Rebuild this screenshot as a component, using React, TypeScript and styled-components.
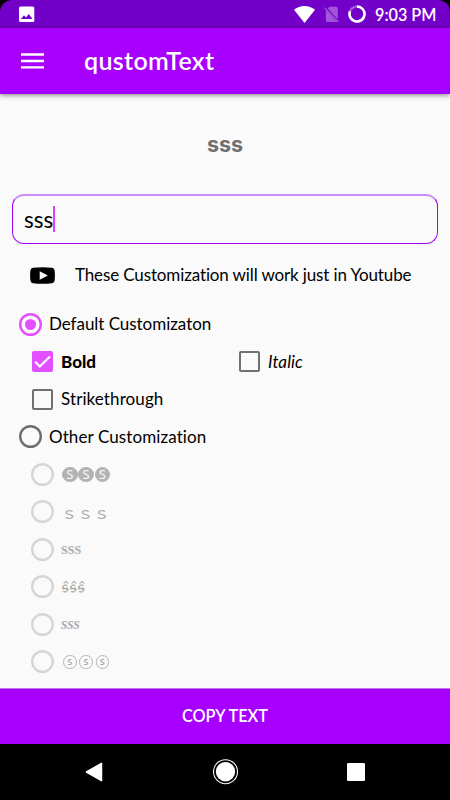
import React from "react";
import styled, { createGlobalStyle } from "styled-components";

const GlobalStyle = createGlobalStyle`
  * { box-sizing: border-box; }
  body { margin: 0; background: #000; }
`;

const Screen = styled.div`
  width: 450px;
  height: 800px;
  display: flex;
  flex-direction: column;
  overflow: hidden;
  background: #fafafa;
  color: #000;
  font-family: Lato, "Open Sans", sans-serif;
  font-variant-ligatures: none;
`;

const StatusCorners = styled.div`
  height: 28px;
  flex: none;
  background: #000;
`;

const StatusBar = styled.div`
  height: 28px;
  display: flex;
  align-items: center;
  padding: 0 15px 0 18px;
  border-radius: 12px 12px 0 0;
  background: #7300c8;
  color: #fff;
`;

const StatusIcons = styled.div`
  margin-left: auto;
  display: flex;
  align-items: center;
  gap: 9px;
`;

const Clock = styled.span`
  width: 60px;
  font-size: 16.2px;
  font-weight: 600;
  line-height: 20px;
  padding-top: 1px;
  white-space: nowrap;
`;

const AppBar = styled.header`
  height: 65.5px;
  flex: none;
  display: flex;
  align-items: center;
  gap: 40px;
  padding: 0 21px;
  background: #a800ff;
  box-shadow: 0 1px 5px rgba(0, 0, 0, 0.5);
  color: #fff;
`;

const Title = styled.h1`
  margin: -1px 0 0;
  font-size: 25px;
  font-weight: 600;
  line-height: 30px;
  letter-spacing: 0.35px;
`;

const Content = styled.main`
  flex: 1;
  display: flex;
  flex-direction: column;
  padding-top: 27.5px;
`;

const Preview = styled.div`
  height: 73px;
  text-align: center;
  font: 700 21.5px/47px Inter, sans-serif;
  color: #6f6f6f;
`;

const TextField = styled.div`
  height: 50px;
  margin: 0 12px;
  padding: 0 0 1px 11px;
  display: flex;
  align-items: center;
  border: 1px solid #a100f5;
  border-top: 2px solid #c88cff;
  border-radius: 12px;
  font-size: 22.5px;
`;

const Caret = styled.span`
  width: 2px;
  height: 26px;
  background: #e040fb;
`;

const Notice = styled.div`
  height: 61.5px;
  display: flex;
  align-items: center;
  gap: 20px;
  padding: 1px 0 0 30px;
`;

const Row = styled.div<{ $indent: number }>`
  height: 37.5px;
  display: flex;
  align-items: center;
  padding-left: ${(p) => p.$indent}px;
`;

const Cell = styled.div<{ $width?: number; $gap: number }>`
  width: ${(p) => (p.$width ? `${p.$width}px` : "auto")};
  display: flex;
  align-items: center;
  gap: ${(p) => p.$gap}px;
`;

const Label = styled.span<{ $spacing?: number; $bold?: boolean; $italic?: boolean }>`
  font-size: 17px;
  line-height: 22px;
  white-space: nowrap;
  letter-spacing: ${(p) => p.$spacing ?? 0}px;
  font-weight: ${(p) => (p.$bold ? 900 : 400)};
  font-style: ${(p) => (p.$italic ? "italic" : "normal")};
`;

const Radio = styled.span<{ $color: string; $checked?: boolean }>`
  width: 23px;
  height: 23px;
  flex: none;
  display: grid;
  place-items: center;
  box-shadow: inset 0 0 0 2.4px ${(p) => p.$color};
  border-radius: 50%;
  &::after {
    content: "";
    width: 11px;
    height: 11px;
    border-radius: 50%;
    background: ${(p) => (p.$checked ? p.$color : "transparent")};
  }
`;

const Checkbox = styled.span<{ $checked?: boolean }>`
  width: 21px;
  height: 21px;
  flex: none;
  display: grid;
  place-items: center;
  border: 2px solid ${(p) => (p.$checked ? "#e14fff" : "#707070")};
  border-radius: 2px;
  background: ${(p) => (p.$checked ? "#e14fff" : "transparent")};
`;

const Discs = styled.span`
  display: flex;
  gap: 0.8px;
`;

const Disc = styled.span<{ $filled?: boolean }>`
  width: ${(p) => (p.$filled ? 15.5 : 13.5)}px;
  height: ${(p) => (p.$filled ? 15.5 : 13.5)}px;
  margin: ${(p) => (p.$filled ? 0 : "0 1px")};
  display: grid;
  place-items: center;
  border: 1px solid #b3b3b3;
  border-radius: 50%;
  background: ${(p) => (p.$filled ? "#b3b3b3" : "transparent")};
  color: ${(p) => (p.$filled ? "#fafafa" : "#a8a8a8")};
  font: ${(p) => (p.$filled ? "400 13px/13px" : "600 9px/11px")} "Noto Sans", sans-serif;
`;

const Sample = styled.span<{ $font: string; $spacing?: number }>`
  margin-left: -1px;
  color: #b0b0b0;
  font: ${(p) => p.$font};
  letter-spacing: ${(p) => p.$spacing ?? 0}px;
  white-space: nowrap;
`;

const CopyButton = styled.button`
  height: 56.5px;
  flex: none;
  border: 0;
  border-top: 1px solid #bb74ea;
  padding: 0;
  background: #a800ff;
  color: #fff;
  font: 600 16.3px/20px Lato, sans-serif;
`;

const NavBar = styled.nav`
  height: 56px;
  flex: none;
  display: flex;
  align-items: center;
  justify-content: space-between;
  padding: 0 85px;
  background: #000;
`;

const ImageIcon = () => (
  <svg width="17" height="17" viewBox="0 0 17 17">
    <rect x="1" y="0.5" width="15.3" height="15.5" rx="1.5" fill="#fff" />
    <path d="M2.8 13 6 9.3 8 11.4 10.8 8 14.6 13Z" fill="#7300c8" />
  </svg>
);

const WifiIcon = () => (
  <svg width="21" height="17" viewBox="0 0 21 17">
    <path d="M0 3.8Q4.5 0 10.5 0T21 3.8L10.5 17Z" fill="#fff" />
  </svg>
);

const NoSimIcon = () => (
  <svg width="15" height="17" viewBox="0 0 15 17">
    <path d="M5.5.8H12q1.8 0 1.8 1.7V13.4L3.8 2.5Z M1.8 3.4 13.2 15.9 12.4 16H3.5q-1.7 0-1.7-1.7Z" fill="#a155da" />
    <path d="M.5 1.6 14.4 16.2" stroke="#a155da" strokeWidth="1.2" />
  </svg>
);

const LoadIcon = () => (
  <svg width="18" height="18" viewBox="0 0 18 18" fill="none" strokeWidth="2.6">
    <circle cx="9" cy="9" r="7.5" stroke="#a155da" />
    <path d="M9 1.5A7.5 7.5 0 1 1 2 6.4" stroke="#fff" />
  </svg>
);

const MenuIcon = () => (
  <svg width="23" height="16" viewBox="0 0 23 16">
    <path d="M0 1.5h23M0 8h23M0 14.3h23" stroke="#fff" strokeWidth="2.3" />
  </svg>
);

const VideoIcon = () => (
  <svg width="25" height="17" viewBox="0 0 25 17">
    <path d="M3 .7Q12.5-.4 22 .7 24.2 1 24.6 3.4 25.2 8.5 24.6 13.6 24.2 16 22 16.3 12.5 17.4 3 16.3.8 16 .4 13.6-.2 8.5.4 3.4.8 1 3 .7Z" />
    <path d="M9.7 4.2v8.6L17.9 8.5Z" fill="#fafafa" />
  </svg>
);

const CheckIcon = () => (
  <svg width="17" height="17" viewBox="0 0 17 17" fill="none">
    <path d="m1.2 8.8 4.6 4.6L16 3.4" stroke="#fff" strokeWidth="2.1" />
  </svg>
);

const BackIcon = () => (
  <svg width="19" height="20" viewBox="0 0 19 20">
    <path d="M1.5 10 16.5 1.3V18.7Z" fill="#fff" stroke="#fff" strokeWidth="1.5" strokeLinejoin="round" />
  </svg>
);

const HomeIcon = () => (
  <svg width="26" height="26" viewBox="0 0 26 26">
    <circle cx="12.5" cy="12.7" r="12" fill="none" stroke="#fff" strokeWidth="1.1" />
    <circle cx="12.5" cy="12.7" r="9.7" fill="#fff" />
  </svg>
);

const RecentsIcon = () => (
  <svg width="18" height="18" viewBox="0 0 18 18">
    <rect width="18" height="18" rx="1.2" fill="#fff" />
  </svg>
);

const samples: React.ReactNode[] = [
  <Discs><Disc $filled>S</Disc><Disc $filled>S</Disc><Disc $filled>S</Disc></Discs>,
  <Sample $font='400 16.3px/22px "Noto Sans CJK JP", sans-serif'>{"\uff53\uff53\uff53"}</Sample>,
  <Sample $font='700 17px/22px "Liberation Serif", serif' $spacing={0.1}>sss</Sample>,
  <Sample $font='400 18px/22px "DejaVu Sans", sans-serif'>𝖘̂𝖘̂𝖘̂</Sample>,
  <Sample $font='italic 700 16.5px/22px "Liberation Serif", serif' $spacing={-0.2}>sss</Sample>,
  <Discs><Disc>S</Disc><Disc>S</Disc><Disc>S</Disc></Discs>,
];

export default function App() {
  return (
    <>
      <GlobalStyle />
      <Screen>
        <StatusCorners>
          <StatusBar>
            <ImageIcon />
            <StatusIcons>
              <WifiIcon />
              <NoSimIcon />
              <LoadIcon />
              <Clock>9:03 PM</Clock>
            </StatusIcons>
          </StatusBar>
        </StatusCorners>
        <AppBar>
          <MenuIcon />
          <Title>qustomText</Title>
        </AppBar>
        <Content>
          <Preview>sss</Preview>
          <TextField>sss<Caret /></TextField>
          <Notice>
            <VideoIcon />
            <Label $spacing={-0.13}>These Customization will work just in Youtube</Label>
          </Notice>
          <Row $indent={19}>
            <Cell $gap={7}>
              <Radio $color="#e14fff" $checked />
              <Label $spacing={-0.04}>Default Customizaton</Label>
            </Cell>
          </Row>
          <Row $indent={32}>
            <Cell $gap={8} $width={207}>
              <Checkbox $checked><CheckIcon /></Checkbox>
              <Label $bold>Bold</Label>
            </Cell>
            <Cell $gap={8}>
              <Checkbox />
              <Label $italic $spacing={0.1}>Italic</Label>
            </Cell>
          </Row>
          <Row $indent={32}>
            <Cell $gap={8}>
              <Checkbox />
              <Label $spacing={0.1}>Strikethrough</Label>
            </Cell>
          </Row>
          <Row $indent={19}>
            <Cell $gap={7}>
              <Radio $color="#6e6e6e" />
              <Label $spacing={0.1}>Other Customization</Label>
            </Cell>
          </Row>
          {samples.map((sample, i) => (
            <Row key={i} $indent={31}>
              <Cell $gap={8}>
                <Radio $color="#d6d6d6" />
                {sample}
              </Cell>
            </Row>
          ))}
        </Content>
        <CopyButton>COPY TEXT</CopyButton>
        <NavBar>
          <BackIcon />
          <HomeIcon />
          <RecentsIcon />
        </NavBar>
      </Screen>
    </>
  );
}
